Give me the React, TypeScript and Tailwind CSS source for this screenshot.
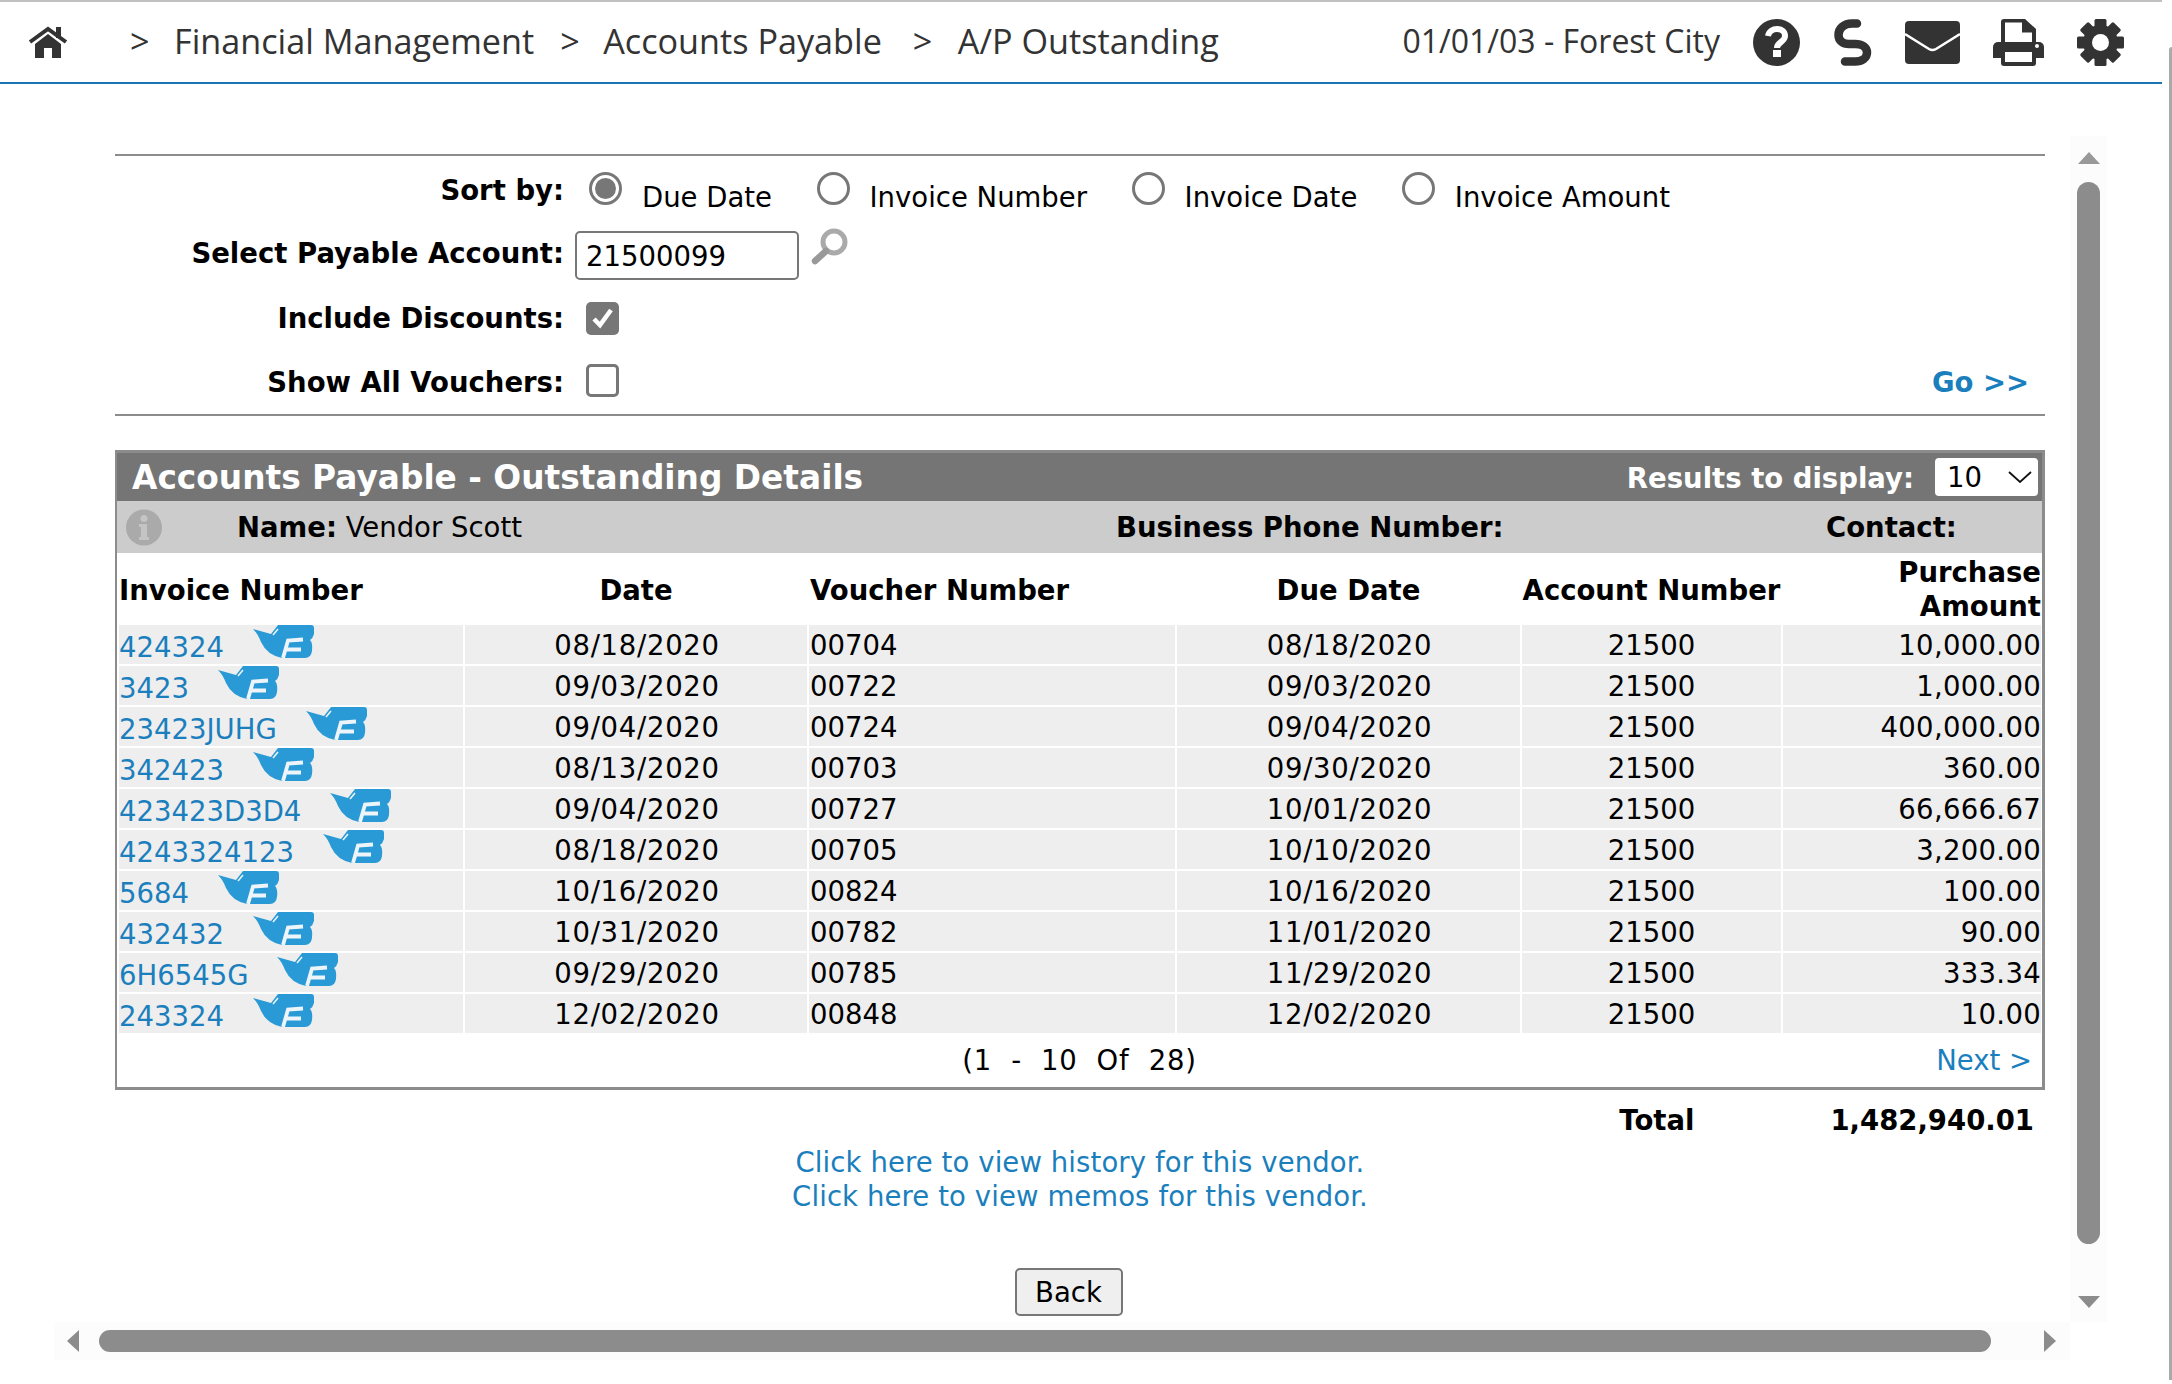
import { ReactNode } from 'react';

const rows = [
  { inv: '424324', date: '08/18/2020', voucher: '00704', due: '08/18/2020', amount: '10,000.00' },
  { inv: '3423', date: '09/03/2020', voucher: '00722', due: '09/03/2020', amount: '1,000.00' },
  { inv: '23423JUHG', date: '09/04/2020', voucher: '00724', due: '09/04/2020', amount: '400,000.00' },
  { inv: '342423', date: '08/13/2020', voucher: '00703', due: '09/30/2020', amount: '360.00' },
  { inv: '423423D3D4', date: '09/04/2020', voucher: '00727', due: '10/01/2020', amount: '66,666.67' },
  { inv: '4243324123', date: '08/18/2020', voucher: '00705', due: '10/10/2020', amount: '3,200.00' },
  { inv: '5684', date: '10/16/2020', voucher: '00824', due: '10/16/2020', amount: '100.00' },
  { inv: '432432', date: '10/31/2020', voucher: '00782', due: '11/01/2020', amount: '90.00' },
  { inv: '6H6545G', date: '09/29/2020', voucher: '00785', due: '11/29/2020', amount: '333.34' },
  { inv: '243324', date: '12/02/2020', voucher: '00848', due: '12/02/2020', amount: '10.00' },
];

const columns = 'grid grid-cols-[344px_342px_366px_343px_259px_258px] gap-x-[2px]';

function HomeIcon() {
  return (
    <svg width="40" height="32" viewBox="0 0 40 32" className="shrink-0">
      <path d="M28 1h5v11h-5z" fill="#333" />
      <path d="M2 16 20 3l18 13" fill="none" stroke="#333" strokeWidth="4" />
      <path d="M7 18 20 8l13 10v14h-9v-10h-8v10H7z" fill="#333" />
    </svg>
  );
}

function HelpIcon() {
  return (
    <svg width="47" height="47" viewBox="0 0 47 47">
      <circle cx="23.5" cy="23.5" r="23.5" fill="#333" />
      <path d="M15 17c1-5 5-7 9-7 5 0 8 3 8 7 0 6-8 6-8 12" fill="none" stroke="#fff" strokeWidth="6" />
      <path d="M20 31h8v7h-8z" fill="#fff" />
    </svg>
  );
}

function LinkIcon() {
  return (
    <svg width="38" height="47" viewBox="0 0 38 47">
      <path
        d="M23 4.500H18C10 4.500 4.500 9.500 4.500 16C4.500 22 9 25 15 25H21C28 25 33 28 33 33.500C33 39 28 42.500 21 42.500H11"
        fill="none"
        stroke="#333"
        strokeWidth="8.500"
        strokeLinecap="round"
      />
    </svg>
  );
}

function MailIcon() {
  return (
    <svg width="55" height="43" viewBox="0 0 55 43">
      <rect width="55" height="43" rx="4" fill="#333" />
      <path d="M0 13 24 28q3.500 2 7 0L55 13" fill="none" stroke="#fff" strokeWidth="2.500" />
    </svg>
  );
}

function PrintIcon() {
  return (
    <svg width="51" height="47" viewBox="0 0 51 47">
      <path d="M8 3a3 3 0 0 1 3-3h21l11 10v14H8z" fill="#333" />
      <path d="M12 3.500h17v10h10v10H12z" fill="#fff" />
      <path d="M5 23h41a5 5 0 0 1 5 5v11H0V28a5 5 0 0 1 5-5z" fill="#333" />
      <circle cx="44" cy="27" r="2" fill="#fff" />
      <path d="M8 30h35v14a3 3 0 0 1-3 3H11a3 3 0 0 1-3-3z" fill="#333" />
      <path d="M12 33h27v10H12z" fill="#fff" />
    </svg>
  );
}

function GearIcon() {
  return (
    <svg width="47" height="47" viewBox="0 0 47 47">
      {[0, 45, 90, 135].map((a) => (
        <rect key={a} x="17.500" y="0" width="12" height="47" rx="1.500" fill="#333" transform={`rotate(${a} 23.500 23.500)`} />
      ))}
      <circle cx="23.500" cy="23.500" r="17.500" fill="#333" />
      <circle cx="23.500" cy="23.500" r="8.500" fill="#fff" />
    </svg>
  );
}

function InfoIcon() {
  return (
    <svg width="36" height="37" viewBox="0 0 36 37" className="shrink-0 blur-[0.5px]">
      <circle cx="18" cy="18.500" r="18" fill="#aaa" />
      <circle cx="18" cy="9.500" r="3.500" fill="#c4c4c4" />
      <path d="M13 15h8v13h2v3H13v-3h2v-10h-2z" fill="#c4c4c4" />
    </svg>
  );
}

function Magnifier() {
  return (
    <svg width="38" height="38" viewBox="0 0 38 38" className="blur-[0.5px]">
      <circle cx="23" cy="15" r="11" fill="none" stroke="#aaa" strokeWidth="5" />
      <path d="M15 24 4 34" fill="none" stroke="#999" strokeWidth="6.500" strokeLinecap="round" />
    </svg>
  );
}

function Logo() {
  return (
    <svg width="61" height="33" viewBox="0 0 61 33" className="shrink-0 blur-[0.7px]">
      <path
        d="M0 4 18 9 25 0H58Q61 0 61 3V9Q60 13 57 15 60 18 59 26 58 33 52 33H29Q14 30 8 17 5 9 0 4Z"
        fill="#2a9ad6"
      />
      <path d="M20 10 25 4" stroke="#eef5fa" strokeWidth="1.500" fill="none" />
      <path d="M30 33 35 15.500 50 14.500M33 24.500H48" stroke="#eef5fa" strokeWidth="3.800" fill="none" />
    </svg>
  );
}

function Radio({ checked = false }: { checked?: boolean }) {
  return (
    <span className="flex h-[33px] w-[33px] shrink-0 items-center justify-center rounded-full border-[3px] border-[#777] bg-white">
      {checked && <span className="h-[21px] w-[21px] rounded-full bg-[#777]" />}
    </span>
  );
}

function SortOption({ label, checked }: { label: string; checked?: boolean }) {
  return (
    <label className="flex items-start gap-[20px]">
      <Radio checked={checked} />
      <span className="mt-[8px]">{label}</span>
    </label>
  );
}

function FormLabel({ children }: { children: ReactNode }) {
  return <div className="w-[449px] shrink-0 text-right font-bold">{children}</div>;
}

export default function App() {
  return (
    <div className="relative h-[1384px] w-[2172px] overflow-hidden bg-white [font-family:DejaVu_Sans,sans-serif] text-[27.5px] leading-[34px] text-black">
      {/* top bar */}
      <header className="mr-[10px] flex h-[84px] items-center border-t-2 border-b-2 border-t-[#c0c0c0] border-b-[#1b75b5] pb-[3px] [font-family:Open_Sans,sans-serif] text-[34.200px] text-[#333]">
        <div className="ml-[28px] w-[102px] pt-[3px]"><HomeIcon /></div>
        <nav className="flex items-center">
          <span className="w-[44px]">&gt;</span>
          <span>Financial Management</span>
          <span className="ml-[26px] w-[43px]">&gt;</span>
          <span>Accounts Payable</span>
          <span className="ml-[31px] w-[45px]">&gt;</span>
          <span>A/P Outstanding</span>
        </nav>
        <div className="ml-auto flex items-center text-[32px]">
          <span className="mr-[33px]">01/01/03 - Forest City</span>
          <div className="mr-[34px] pt-[3px]"><HelpIcon /></div>
          <div className="mr-[33px] pt-[3px]"><LinkIcon /></div>
          <div className="mr-[33px] pt-[3px]"><MailIcon /></div>
          <div className="mr-[33px] pt-[3px]"><PrintIcon /></div>
          <div className="mr-[38px] pt-[3px]"><GearIcon /></div>
        </div>
      </header>

      <main className="ml-[115px] w-[1930px]">
        {/* filter form */}
        <section className="mt-[70px] h-[262px] border-y-2 border-[#8c8c8c]">
          <div className="flex h-[70px] items-start">
            <div className="mt-[17px]"><FormLabel>Sort by:</FormLabel></div>
            <div className="ml-[25px] mt-[16px] flex gap-[44.500px]">
              <SortOption label="Due Date" checked />
              <SortOption label="Invoice Number" />
              <SortOption label="Invoice Date" />
              <SortOption label="Invoice Amount" />
            </div>
          </div>
          <div className="flex h-[61px] items-start">
            <div className="mt-[10px]"><FormLabel>Select Payable Account:</FormLabel></div>
            <div className="ml-[11px] mt-[5px] flex h-[49px] w-[224px] items-center rounded-[5px] border-2 border-[#777] pl-[9px] pt-[1px]">21500099</div>
            <div className="ml-[12px] mt-[1px]"><Magnifier /></div>
          </div>
          <div className="flex h-[62px] items-center">
            <FormLabel>Include Discounts:</FormLabel>
            <span className="ml-[22px] flex h-[33px] w-[33px] items-center justify-center rounded-[5px] bg-[#777]">
              <svg width="23" height="22" viewBox="0 0 23 22">
                <path d="M3 12l6 6L20 3" fill="none" stroke="#fff" strokeWidth="4.500" />
              </svg>
            </span>
          </div>
          <div className="flex h-[65px] items-center">
            <FormLabel>Show All Vouchers:</FormLabel>
            <span className="mb-[2px] ml-[22px] h-[33px] w-[33px] rounded-[5px] border-[3px] border-[#777]" />
            <a className="ml-auto mr-[16px] font-bold text-[#1b7fbd]">Go &gt;&gt;</a>
          </div>
        </section>

        {/* details box */}
        <section className="mt-[34px] border-[3px] border-l-2 border-[#8c8c8c]">
          <div className="flex h-[48px] items-center justify-between bg-[#757575] pl-[15px] pr-[4px] font-bold text-white">
            <h1 className="pt-[1px] text-[32.800px]">Accounts Payable - Outstanding Details</h1>
            <div className="flex items-center">
              <span className="mr-[21px] pt-[2px]">Results to display:</span>
              <div className="flex h-[38px] w-[103px] items-center justify-between rounded-[4px] bg-white pl-[12px] pr-[6px] font-normal text-black">
                10
                <svg width="24" height="12" viewBox="0 0 24 12">
                  <path d="M1 1l11 10L23 1" fill="none" stroke="#111" strokeWidth="1.800" />
                </svg>
              </div>
            </div>
          </div>
          <div className="flex h-[52px] items-center bg-[#ccc] pl-[9px]">
            <InfoIcon />
            <div className="ml-[75px] w-[879px]"><b>Name:</b> Vendor Scott</div>
            <div className="w-[710px] font-bold">Business Phone Number:</div>
            <div className="font-bold">Contact:</div>
          </div>

          <div className={`${columns} ml-[2px] h-[72px] items-center font-bold`}>
            <div className="pt-[1px]">Invoice Number</div>
            <div className="pt-[1px] text-center">Date</div>
            <div className="pl-[1px] pt-[1px]">Voucher Number</div>
            <div className="pt-[1px] text-center">Due Date</div>
            <div className="pt-[1px] text-center">Account Number</div>
            <div className="text-right">Purchase<br />Amount</div>
          </div>
          <div className="ml-[2px] flex flex-col gap-y-[2px]">
            {rows.map((r) => (
              <div key={r.voucher} className={`${columns} h-[39px] items-center`}>
                <div className="flex h-[39px] items-start overflow-hidden bg-[#eee]">
                  <a className="mt-[5px] mr-[29px] text-[#1b7fbd]">{r.inv}</a>
                  <Logo />
                </div>
                <div className="flex h-[39px] items-center justify-center bg-[#eee] pl-[2px] tracking-[0.7px]">{r.date}</div>
                <div className="flex h-[39px] items-center bg-[#eee] pl-[1px]">{r.voucher}</div>
                <div className="flex h-[39px] items-center justify-center bg-[#eee] pl-[2px] tracking-[0.7px]">{r.due}</div>
                <div className="flex h-[39px] items-center justify-center bg-[#eee]">21500</div>
                <div className="flex h-[39px] items-center justify-end bg-[#eee] tracking-[0.3px]">{r.amount}</div>
              </div>
            ))}
          </div>
          <div className="relative flex h-[54px] items-center justify-center">
            <span className="whitespace-pre tracking-[0.8px]">(1  -  10  Of  28)</span>
            <a className="absolute right-[10px] text-[#1b7fbd]">Next &gt;</a>
          </div>
        </section>

        <div className="mt-[13px] flex h-[34px] items-center justify-end font-bold">
          <span>Total</span>
          <span className="ml-[136px] mr-[11px]">1,482,940.01</span>
        </div>
        <div className="mt-[8px] text-center tracking-[0.1px] text-[#1b7fbd]">
          <a className="block">Click here to view history for this vendor.</a>
          <a className="block">Click here to view memos for this vendor.</a>
        </div>
        <div className="mt-[55px] flex justify-center pr-[23px]">
          <button className="h-[48px] w-[108px] rounded-[5px] border-2 border-[#777] bg-[#efefef]">Back</button>
        </div>
      </main>

      {/* scrollbars lie over the page */}
      <div className="absolute left-[2070px] top-[136px] flex h-[1186px] w-[37px] flex-col items-center bg-[#fcfcfc] pt-[16px]">
        <span className="h-0 w-0 border-x-[11px] border-b-[12px] border-x-transparent border-b-[#999]" />
        <span className="mt-[18px] h-[1062px] w-[23px] rounded-full bg-[#8c8c8c]" />
        <span className="mt-[52px] h-0 w-0 border-x-[11px] border-t-[12px] border-x-transparent border-t-[#8c8c8c]" />
      </div>
      <div className="absolute left-[54px] top-[1322px] flex h-[38px] w-[2016px] items-center bg-[#fcfcfc] pl-[13px]">
        <span className="h-0 w-0 border-y-[11px] border-r-[12px] border-y-transparent border-r-[#8c8c8c]" />
        <span className="ml-[20px] h-[22px] w-[1892px] rounded-full bg-[#8c8c8c]" />
        <span className="ml-[53px] h-0 w-0 border-y-[11px] border-l-[12px] border-y-transparent border-l-[#8c8c8c]" />
      </div>
      <div className="absolute right-0 top-[47px] h-[1333px] w-[3px] rounded-tl-[6px] bg-[#aaa]" />
    </div>
  );
}
